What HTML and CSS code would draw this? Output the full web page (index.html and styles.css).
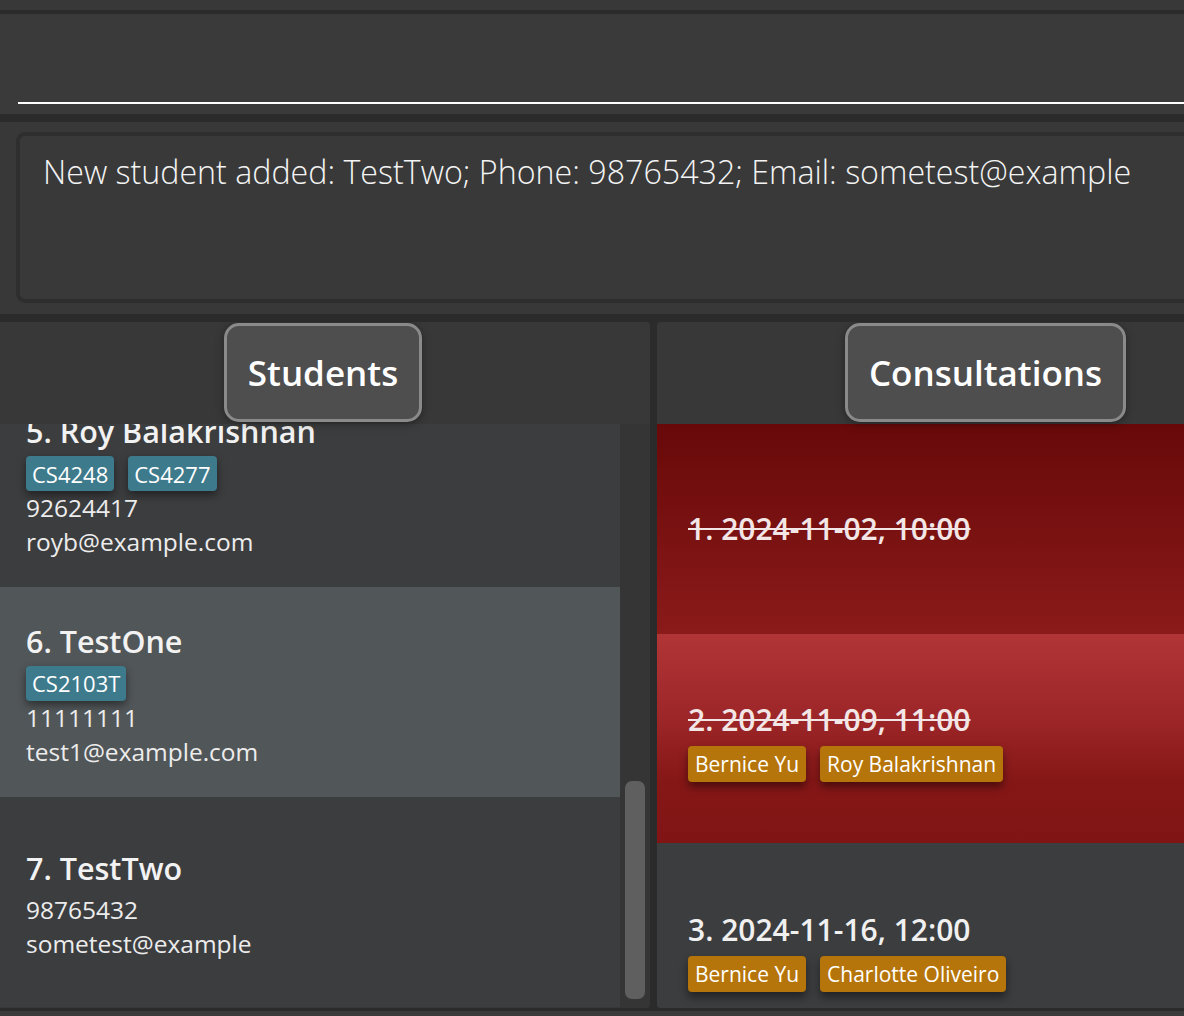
FILE: index.html
```html
<!DOCTYPE html>
<html>
<head>
<meta charset="utf-8">
<link rel="stylesheet" href="styles.css">
</head>
<body>
<div class="app">
  <div class="menu-strip"></div>
  <div class="command-box">
    <div class="command-line"></div>
  </div>
  <div class="result-area">
    <div class="result-box">New student added: TestTwo; Phone: 98765432; Email: sometest@example</div>
  </div>
  <div class="panels">
    <section class="panel panel-left">
      <div class="panel-head"><div class="title-btn">Students</div></div>
      <div class="list-wrap">
        <div class="list list-students">
          <div class="cell cell-partial">
            <div class="name">5. Roy Balakrishnan</div>
            <div class="tags"><span class="tag">CS4248</span><span class="tag">CS4277</span></div>
            <div class="line">92624417</div>
            <div class="line">royb@example.com</div>
          </div>
          <div class="cell cell-selected">
            <div class="name">6. TestOne</div>
            <div class="tags"><span class="tag">CS2103T</span></div>
            <div class="line">11111111</div>
            <div class="line">test1@example.com</div>
          </div>
          <div class="cell">
            <div class="name">7. TestTwo</div>
            <div class="tags"></div>
            <div class="line">98765432</div>
            <div class="line">sometest@example</div>
          </div>
        </div>
        <div class="scrollbar"><div class="thumb"></div></div>
      </div>
    </section>
    <div class="divider"></div>
    <section class="panel panel-right">
      <div class="panel-head"><div class="title-btn">Consultations</div></div>
      <div class="list list-consults">
        <div class="ccell ccell-past">
          <div class="date done">1. 2024-11-02, 10:00</div>
          <div class="ctags"></div>
        </div>
        <div class="ccell ccell-past-hl">
          <div class="date done">2. 2024-11-09, 11:00</div>
          <div class="ctags"><span class="ctag">Bernice Yu</span><span class="ctag">Roy Balakrishnan</span></div>
        </div>
        <div class="ccell">
          <div class="date">3. 2024-11-16, 12:00</div>
          <div class="ctags"><span class="ctag">Bernice Yu</span><span class="ctag">Charlotte Oliveiro</span></div>
        </div>
      </div>
    </section>
  </div>
  <div class="bottom-strip"></div>
</div>
</body>
</html>
```
FILE: styles.css
```css
html, body {
  margin: 0;
  padding: 0;
  background: #2b2b2b;
  overflow: hidden;
}
.app {
  width: 1184px;
  height: 1016px;
  overflow: hidden;
  display: flex;
  flex-direction: column;
  font-family: "Open Sans", "Noto Sans", sans-serif;
  color: #ffffff;
}
.menu-strip {
  height: 10px;
  flex: none;
  background: #383838;
  border-bottom: 4px solid #2b2b2b;
}
.command-box {
  flex: none;
  background: #3a3a3a;
  padding-top: 88px;
  box-sizing: border-box;
  border-bottom: 8px solid #2b2b2b;
  height: 108px;
}
.command-line {
  margin-left: 18px;
  height: 2px;
  background: #ffffff;
}
.result-area {
  flex: none;
  box-sizing: border-box;
  background: #383838;
  padding: 10px 0 11px 16px;
  border-bottom: 8px solid #2b2b2b;
  height: 200px;
  overflow: hidden;
}
.result-box {
  width: 1300px;
  height: 171px;
  box-sizing: border-box;
  border: 4px solid #2e2e2e;
  border-radius: 9px;
  background: #393939;
  padding: 14px 0 0 23px;
  font-weight: 300;
  font-size: 32.2px;
  line-height: 44px;
  color: #f4f4f4;
  white-space: nowrap;
}
.panels {
  flex: none;
  height: 686px;
  display: flex;
  overflow: hidden;
}
.panel {
  background: #383838;
  display: flex;
  flex-direction: column;
  flex: none;
  overflow: hidden;
}
.panel-left {
  width: 650px;
  border-radius: 0 4px 4px 0;
}
.panel-right {
  width: 657px;
  border-radius: 4px 0 0 4px;
}
.divider {
  width: 7px;
  flex: none;
  background: #2b2b2b;
}
.panel-head {
  height: 102px;
  flex: none;
  display: flex;
  justify-content: center;
  align-items: flex-start;
  padding-top: 1px;
  box-sizing: border-box;
}
.panel-left .panel-head {
  padding-right: 4px;
}
.title-btn {
  height: 99px;
  box-sizing: border-box;
  border: 3px solid #8a8a8a;
  border-radius: 15px;
  background: #4e4e4e;
  box-shadow: 0 2px 8px rgba(0, 0, 0, 0.35);
  display: flex;
  align-items: center;
  justify-content: center;
  padding: 0 21px;
  font-weight: 600;
  font-size: 35px;
  color: #ffffff;
  position: relative;
  z-index: 2;
}
.list-wrap {
  flex: 1;
  display: flex;
  min-height: 0;
}
.list {
  display: flex;
  flex-direction: column;
  overflow: hidden;
}
.list-students {
  width: 620px;
  flex: none;
}
.scrollbar {
  flex: 1;
  background: #353535;
  position: relative;
}
.thumb {
  position: absolute;
  left: 5px;
  right: 5px;
  top: 357px;
  height: 218px;
  border-radius: 7px;
  background: #5f5f5f;
}
.cell {
  height: 210px;
  flex: none;
  box-sizing: border-box;
  padding: 6px 0 0 26px;
  display: flex;
  flex-direction: column;
  justify-content: center;
  background: #3c3d3f;
}
.cell-partial {
  height: 163px;
  justify-content: flex-end;
  padding-bottom: 28px;
}
.cell-selected {
  background: #515658;
}
.name {
  font-weight: 600;
  font-size: 30.5px;
  line-height: 38px;
  margin-bottom: 6px;
  color: #f2f2f2;
  white-space: nowrap;
}
.tags {
  display: flex;
  gap: 14px;
}
.tag {
  height: 35px;
  box-sizing: border-box;
  padding: 0 6px;
  display: flex;
  align-items: center;
  background: #3d7a8c;
  border-radius: 4px;
  font-size: 22px;
  color: #ffffff;
  box-shadow: 0 4px 8px rgba(0, 0, 0, 0.45);
}
.line {
  font-size: 24.5px;
  line-height: 34px;
  color: #ececec;
  white-space: nowrap;
}
.list-consults {
  flex: 1;
}
.ccell {
  height: 210px;
  flex: none;
  box-sizing: border-box;
  padding: 6px 0 0 31px;
  display: flex;
  flex-direction: column;
  justify-content: center;
  background: #3c3d3f;
}
.ccell-past {
  background: linear-gradient(180deg, #680909 0%, #8b1a1a 100%);
}
.ccell-past-hl {
  height: 209px;
  background: linear-gradient(180deg, #b13537 0%, #9d2628 40%, #861717 70%, #801414 100%);
}
.date {
  font-weight: 600;
  font-size: 30px;
  line-height: 38px;
  margin-bottom: 7px;
  color: #f0f0f0;
  white-space: nowrap;
}
.date.done {
  text-decoration: line-through;
  text-decoration-thickness: 2px;
  color: #f3e6e6;
}
.ctags {
  display: flex;
  gap: 14px;
}
.ctag {
  height: 36px;
  box-sizing: border-box;
  padding: 0 7px;
  display: flex;
  align-items: center;
  background: #b5750a;
  border-radius: 4px;
  font-size: 21px;
  color: #ffffff;
  box-shadow: 0 5px 8px rgba(0, 0, 0, 0.45);
}
.bottom-strip {
  flex: 1;
  background: #2b2b2b;
  border-bottom: 5px solid #3a3a3a;
}
```
